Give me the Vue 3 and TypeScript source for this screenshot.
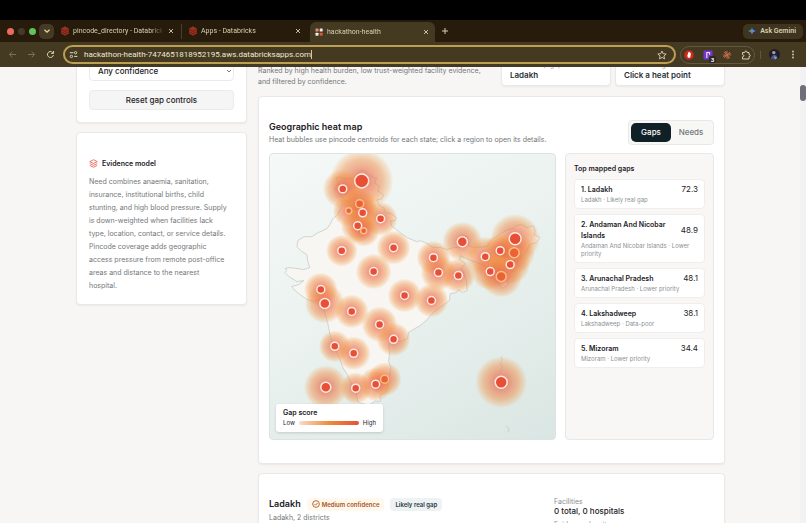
<script setup lang="ts">
import { ref } from 'vue'

interface Bubble { name: string; x: number; y: number; halo: number; dot: number; soft?: boolean }
interface Gap { rank: number; name: string; note: string; score: string }

const address = ref('hackathon-health-7474651818952195.aws.databricksapps.com')
const confidence = ref('Any confidence')
const mode = ref<'Gaps' | 'Needs'>('Gaps')
const modes: Array<'Gaps' | 'Needs'> = ['Gaps', 'Needs']

const bubbles: Bubble[] = [
  { name: 'Ladakh', x: 92, y: 27, halo: 32, dot: 7 },
  { name: 'Jammu and Kashmir', x: 73, y: 35, halo: 20, dot: 4 },
  { name: 'Uttarakhand', x: 111, y: 65, halo: 17, dot: 4 },
  { name: 'Punjab', x: 79, y: 57, halo: 16, dot: 3, soft: true },
  { name: 'Himachal Pradesh', x: 90, y: 50, halo: 17, dot: 4, soft: true },
  { name: 'Chandigarh', x: 93, y: 59, halo: 17, dot: 4 },
  { name: 'Haryana', x: 88, y: 72, halo: 17, dot: 4 },
  { name: 'Delhi', x: 94, y: 77, halo: 16, dot: 3, soft: true },
  { name: 'Rajasthan', x: 72, y: 97, halo: 16, dot: 4 },
  { name: 'Uttar Pradesh', x: 124, y: 94, halo: 17, dot: 4 },
  { name: 'Madhya Pradesh', x: 104, y: 118, halo: 18, dot: 4 },
  { name: 'Gujarat', x: 51, y: 136, halo: 17, dot: 4 },
  { name: 'Daman and Diu', x: 55, y: 150, halo: 20, dot: 5 },
  { name: 'Maharashtra', x: 82, y: 158, halo: 17, dot: 4 },
  { name: 'Chhattisgarh', x: 135, y: 142, halo: 17, dot: 4 },
  { name: 'Odisha', x: 162, y: 147, halo: 17, dot: 4 },
  { name: 'Bihar', x: 164, y: 104, halo: 17, dot: 4 },
  { name: 'Jharkhand', x: 169, y: 119, halo: 18, dot: 4 },
  { name: 'West Bengal', x: 189, y: 122, halo: 17, dot: 4 },
  { name: 'Sikkim', x: 193, y: 88, halo: 20, dot: 5 },
  { name: 'Arunachal Pradesh', x: 246, y: 85, halo: 25, dot: 6 },
  { name: 'Nagaland', x: 245, y: 99, halo: 21, dot: 5, soft: true },
  { name: 'Meghalaya', x: 216, y: 103, halo: 20, dot: 4 },
  { name: 'Manipur', x: 241, y: 111, halo: 20, dot: 4 },
  { name: 'Assam', x: 231, y: 97, halo: 17, dot: 4 },
  { name: 'Tripura', x: 221, y: 118, halo: 19, dot: 4 },
  { name: 'Mizoram', x: 232, y: 123, halo: 21, dot: 5, soft: true },
  { name: 'Telangana', x: 110, y: 171, halo: 18, dot: 4 },
  { name: 'Andhra Pradesh', x: 124, y: 186, halo: 17, dot: 4 },
  { name: 'Goa', x: 65, y: 193, halo: 16, dot: 4 },
  { name: 'Karnataka', x: 84, y: 200, halo: 17, dot: 4 },
  { name: 'Lakshadweep', x: 56, y: 234, halo: 22, dot: 5 },
  { name: 'Kerala', x: 86, y: 235, halo: 16, dot: 4 },
  { name: 'Puducherry', x: 115, y: 226, halo: 17, dot: 4, soft: true },
  { name: 'Tamil Nadu', x: 106, y: 231, halo: 17, dot: 4 },
  { name: 'Andaman And Nicobar Islands', x: 232, y: 229, halo: 26, dot: 6 },
]

const gaps: Gap[] = [
  { rank: 1, name: 'Ladakh', note: 'Ladakh · Likely real gap', score: '72.3' },
  { rank: 2, name: 'Andaman And Nicobar Islands', note: 'Andaman And Nicobar Islands · Lower priority', score: '48.9' },
  { rank: 3, name: 'Arunachal Pradesh', note: 'Arunachal Pradesh · Lower priority', score: '48.1' },
  { rank: 4, name: 'Lakshadweep', note: 'Lakshadweep · Data-poor', score: '38.1' },
  { rank: 5, name: 'Mizoram', note: 'Mizoram · Lower priority', score: '34.4' },
]

const tabs = [
  { title: 'pincode_directory - Databricks', kind: 'brick', active: false },
  { title: 'Apps - Databricks', kind: 'brick', active: false },
  { title: 'hackathon-health', kind: 'grid', active: true },
]
</script>

<template>
  <div class="window">
    <header class="browser">
      <div class="menu-bar"></div>
      <div class="tab-strip">
        <div class="lights"><i class="red"></i><i class="dim"></i><i class="green"></i></div>
        <button class="tab-search" aria-label="Search tabs">
          <svg width="8" height="8" viewBox="0 0 8 8"><path d="M1.5 2.8 4 5.2 6.500 2.800" fill="none" stroke="#e9dcae" stroke-width="1.200" /></svg>
        </button>
        <div v-for="tab in tabs" :key="tab.title" class="tab" :class="{ active: tab.active }">
          <svg v-if="tab.kind === 'brick'" class="favicon" width="10" height="10" viewBox="0 0 10 10">
            <path d="M1 2.500 5 .3 9 2.500V7.400L5 9.700 1 7.400Z" fill="#98301f" />
            <path d="M1 3.200 5 5.300 9 3.200M1 5.600 5 7.800 9 5.600" fill="none" stroke="#5a1d12" stroke-width=".7" />
          </svg>
          <svg v-else class="favicon" width="10" height="10" viewBox="0 0 10 10">
            <rect x="1.500" y="1.500" width="3" height="3" rx=".6" fill="#e88a7a" />
            <rect x="5.700" y="1.500" width="3" height="3" rx=".6" fill="#f7e6df" />
            <rect x="1.500" y="5.700" width="3" height="3" rx=".6" fill="#f7e6df" />
            <rect x="5.700" y="5.700" width="3" height="3" rx=".6" fill="#e0533f" />
          </svg>
          <span class="tab-title">{{ tab.title }}</span>
          <button class="close" :aria-label="`Close ${tab.title}`">
            <svg width="6" height="6" viewBox="0 0 6 6"><path d="M1 1 5 5M5 1 1 5" stroke="currentColor" stroke-width=".9" /></svg>
          </button>
        </div>
        <button class="new-tab" aria-label="New tab">
          <svg width="8" height="8" viewBox="0 0 8 8"><path d="M4 1V7M1 4H7" stroke="#d9cfae" stroke-width="1" /></svg>
        </button>
        <button class="gemini">
          <svg width="8" height="8" viewBox="0 0 8 8">
            <defs>
              <linearGradient id="spark" x1="0" y1=".3" x2="1" y2=".7">
                <stop offset="0" stop-color="#f2c230" /><stop offset=".3" stop-color="#5b9a6c" /><stop offset=".5" stop-color="#4b86f0" /><stop offset="1" stop-color="#6f9cf5" />
              </linearGradient>
            </defs>
            <path d="M4 0C4.300 2.500 5.500 3.700 8 4 5.500 4.300 4.300 5.500 4 8 3.700 5.500 2.500 4.300 0 4 2.500 3.700 3.700 2.500 4 0Z" fill="url(#spark)" />
          </svg>
          Ask Gemini
        </button>
      </div>
      <div class="toolbar">
        <nav class="nav">
          <button aria-label="Back"><svg width="9" height="9" viewBox="0 0 9 9"><path d="M8 4.500H1.500M4.300 1.600 1.400 4.500 4.300 7.400" fill="none" stroke="#7b7256" /></svg></button>
          <button aria-label="Forward"><svg width="9" height="9" viewBox="0 0 9 9"><path d="M1 4.500H7.500M4.700 1.600 7.600 4.500 4.700 7.400" fill="none" stroke="#7b7256" /></svg></button>
          <button aria-label="Reload"><svg width="9" height="9" viewBox="0 0 9 9"><path d="M7.400 5A3 3 0 1 1 6.600 2.400L7.400 3.200M7.500 1V3.400H5.100" fill="none" stroke="#d9cfae" /></svg></button>
        </nav>
        <div class="omnibox">
          <svg width="9" height="9" viewBox="0 0 9 9">
            <path d="M.8 2.700H4.400M5.200 6.400H8.400" stroke="#e0d8bd" />
            <circle cx="6.600" cy="2.700" r="1.200" fill="none" stroke="#e0d8bd" stroke-width=".9" />
            <circle cx="2.400" cy="6.400" r="1.200" fill="none" stroke="#e0d8bd" stroke-width=".9" />
          </svg>
          <label class="address"><input v-model="address" aria-label="Address" /><span class="caret"></span></label>
          <button aria-label="Bookmark this page">
            <svg width="10" height="10" viewBox="0 0 10 10"><path d="M5 1 6.200 3.700 9.200 4 6.900 6 7.600 8.900 5 7.400 2.400 8.900 3.100 6 .8 4 3.800 3.700Z" fill="none" stroke="#d9cfae" stroke-width=".9" /></svg>
          </button>
        </div>
        <div class="extensions">
          <button aria-label="Ad blocker">
            <svg width="10" height="10" viewBox="0 0 10 10"><path d="M3 .5H7L9.500 3V7L7 9.500H3L.5 7V3Z" fill="#d3281f" /><path d="M3.200 4.500 3.700 7.200 5 8 6.300 7.200 6.900 4V3.300H6.300V2.500H5.600V2H4.700V2.500H4V4.800Z" fill="#fff" /></svg>
          </button>
          <button class="badged" aria-label="Recorder">
            <svg width="10" height="10" viewBox="0 0 10 10"><rect x=".5" y=".5" width="9" height="9" rx="1" fill="#7438c9" /><path d="M3.800 8V2.500H6.500V4.800" fill="none" stroke="#e8d9ff" stroke-width="1.200" /></svg>
            <span class="badge">3</span>
          </button>
          <button aria-label="Assistant">
            <svg width="10" height="10" viewBox="0 0 10 10"><path d="M5 .8V9.200M.8 5H9.200M2 2 8 8M8 2 2 8M3.400 1.200 6.600 8.800M1.200 6.600 8.800 3.400" stroke="#c9694b" stroke-width=".9" /></svg>
          </button>
          <button aria-label="Extensions">
            <svg width="10" height="10" viewBox="0 0 10 10"><path d="M1.500 2.500H3.700Q3.700 1 4.900 1 6.100 1 6.100 2.500H8V4.500Q9.300 4.500 9.300 5.500 9.300 6.600 8 6.600V9H1.500V6.900Q2.900 6.800 2.900 5.700 2.900 4.700 1.500 4.600Z" fill="none" stroke="#d9cfae" /></svg>
          </button>
        </div>
        <div class="divider"></div>
        <button class="profile" aria-label="Profile">
          <svg width="11" height="11" viewBox="0 0 11 11"><circle cx="5.500" cy="5.500" r="5.500" fill="#1d1d2c" /><circle cx="4.800" cy="3.600" r="1.700" fill="#b79a91" /><path d="M1.800 9.500Q3 5.500 6 5.800 8.300 6.300 8.600 9.800 5 12 1.800 9.500Z" fill="#4a5488" /><path d="M5 7 8 8.500 6 10.500Z" fill="#a7a6b5" /></svg>
        </button>
        <button class="more" aria-label="Menu">
          <svg width="4" height="9" viewBox="0 0 4 9"><circle cx="2" cy="1.500" r=".9" fill="#d9cfae" /><circle cx="2" cy="4.500" r=".9" fill="#d9cfae" /><circle cx="2" cy="7.500" r=".9" fill="#d9cfae" /></svg>
        </button>
      </div>
    </header>

    <div class="viewport">
      <div class="page">
        <aside class="side">
          <section class="card controls">
            <div class="select-wrap">
              <select v-model="confidence" aria-label="Confidence"><option>Any confidence</option></select>
              <svg width="6" height="6" viewBox="0 0 6 6"><path d="M1 2 3 4 5 2" fill="none" stroke="#555" stroke-width=".8" /></svg>
            </div>
            <button class="reset">Reset gap controls</button>
          </section>
          <section class="card evidence">
            <h2>
              <svg width="9" height="9" viewBox="0 0 24 24" fill="none" stroke="#ee5a48" stroke-width="2.200" stroke-linejoin="round"><path d="M12 2 22 7 12 12 2 7Z" /><path d="M2 12 12 17 22 12" /><path d="M2 17 12 22 22 17" /></svg>
              Evidence model
            </h2>
            <p>Need combines anaemia, sanitation, insurance, institutional births, child stunting, and high blood pressure. Supply is down-weighted when facilities lack type, location, contact, or service details. Pincode coverage adds geographic access pressure from remote post-office areas and distance to the nearest hospital.</p>
          </section>
        </aside>

        <main class="main">
          <div class="intro">
            <p>Ranked by high health burden, low trust-weighted facility evidence, and filtered by confidence.</p>
            <div class="card stat"><span>Current top gap</span><strong>Ladakh</strong></div>
            <div class="card stat"><span>Selected region</span><strong>Click a heat point</strong></div>
          </div>

          <section class="card map-card">
            <div class="map-head">
              <div>
                <h1>Geographic heat map</h1>
                <p>Heat bubbles use pincode centroids for each state; click a region to open its details.</p>
              </div>
              <div class="toggle">
                <button v-for="m in modes" :key="m" :class="{ on: mode === m }" @click="mode = m">{{ m }}</button>
              </div>
            </div>
            <div class="map-body">
              <div class="map">
                <svg class="map-art" viewBox="0 0 286 286">
                  <defs>
                    <radialGradient id="halo">
                      <stop offset="0" stop-color="#ea5034" stop-opacity=".75" />
                      <stop offset=".35" stop-color="#ea6a44" stop-opacity=".6" />
                      <stop offset=".68" stop-color="#ef8a40" stop-opacity=".46" />
                      <stop offset=".87" stop-color="#f2a050" stop-opacity=".26" />
                      <stop offset="1" stop-color="#f3a860" stop-opacity="0" />
                    </radialGradient>
                  </defs>
                  <path class="land" d="M66 24 70 23 74 25 82 25 86 21 91 17 95 17 98 20 104 24 107 24 105 29 110 33 108 37 114 41 112 45 107 46 109 51 114 54 116 59 122 60 127 64 125 67 121 67 122 72 127 76 132 80 138 84 147 88 151 87 158 90 163 94 171 94 178 96 184 94 191 94 190 88 192 82 198 83 199 92 206 94 218 93 222 87 230 81 238 76 244 75 247 72 252 71 258 74 264 72 266 77 265 81 271 84 267 89 260 91 258 97 249 106 247 115 241 120 238 127 239 131 233 135 230 130 227 122 221 125 216 120 217 113 208 109 200 106 196 104 191 102 190 106 196 110 192 114 195 121 197 128 198 137 193 139 189 136 187 139 181 140 180 147 175 151 167 156 161 162 158 166 151 172 144 176 139 179 138 185 131 188 122 188 119 192 120 200 119 208 121 214 120 222 118 232 116 239 110 242 111 248 105 248 99 252 91 250 88 248 87 241 82 231 78 222 73 214 70 205 66 197 62 187 60 180 58 170 55 159 54 149 49 146 44 148 37 146 30 141 24 136 22 133 29 131 34 127 27 128 19 123 15 119 17 117 15 115 19 114 28 115 34 116 40 114 38 108 37 101 32 98 27 93 28 87 34 83 42 83 48 79 57 75 60 71 63 65 68 61 72 53 77 48 72 43 70 38 65 35 69 29Z" />
                  <path class="islands" d="M232 203 233 207 231 209 233 214 231 219M237 273 240 276 239 279" />
                  <circle v-for="b in bubbles" :key="b.name + '-halo'" :cx="b.x" :cy="b.y" :r="b.halo" fill="url(#halo)" />
                  <circle v-for="b in bubbles" :key="b.name" class="dot" :class="{ soft: b.soft }" :cx="b.x" :cy="b.y" :r="b.dot"><title>{{ b.name }}</title></circle>
                </svg>
                <div class="legend">
                  <strong>Gap score</strong>
                  <div class="scale"><span>Low</span><i></i><span>High</span></div>
                </div>
              </div>
              <div class="ranking">
                <h2>Top mapped gaps</h2>
                <button v-for="g in gaps" :key="g.rank" class="gap">
                  <span class="gap-row"><b>{{ g.rank }}. {{ g.name }}</b><span class="score">{{ g.score }}</span></span>
                  <small>{{ g.note }}</small>
                </button>
              </div>
            </div>
          </section>

          <section class="card region">
            <div class="region-name">
              <div class="region-title">
                <h2>Ladakh</h2>
                <span class="pill amber">
                  <svg width="8" height="8" viewBox="0 0 24 24" fill="none" stroke="#a8551f" stroke-width="2.600"><circle cx="12" cy="12" r="10" /><path d="M7.500 12.500 10.500 15.500 16.500 9" /></svg>
                  Medium confidence
                </span>
                <span class="pill">Likely real gap</span>
              </div>
              <p>Ladakh, 2 districts</p>
            </div>
            <dl>
              <dt>Facilities</dt>
              <dd>0 total, 0 hospitals</dd>
              <dt>Evidence density</dt>
            </dl>
          </section>
        </main>
      </div>
      <div class="scrollbar"><i></i></div>
    </div>
  </div>
</template>

<style>
body { margin: 0; overflow: hidden; }
</style>

<style scoped>
.window { display: flex; flex-direction: column; height: 100vh; background: #f7f6f5; color: #1c2024; font: 7px/11px Inter, "Liberation Sans", sans-serif; }
.window * { box-sizing: border-box; }
button, input, select { font: inherit; color: inherit; margin: 0; padding: 0; border: 0; background: none; }
svg { display: block; flex: none; }
h1, h2, p, dl, dd { margin: 0; }

.browser { flex: none; color: #d9cfae; font-family: Roboto, "Liberation Sans", sans-serif; }
.menu-bar { height: 20px; background: #000; }
.tab-strip { display: flex; align-items: center; height: 22px; padding: 0 3px 0 7px; background: #271b0b; }
.lights { display: flex; gap: 4px; margin-right: 3px; }
.lights i { width: 7px; height: 7px; border-radius: 50%; }
.red { background: #ee6a5f; }
.dim { background: #453a28; }
.green { background: #5fc454; }
.tab-search { display: grid; place-items: center; width: 15px; height: 15px; border-radius: 5px; background: #453a23; }
.tab { display: flex; align-items: center; gap: 3px; width: 127px; height: 15px; padding: 0 6px; }
.tab + .tab:not(.active) { border-left: 1px solid #4a3e28; }
.tab.active { align-self: flex-end; width: 125px; height: 20px; margin-left: 2px; padding: 0 5px 0 4px; border-radius: 6px 6px 0 0; background: #443a22; }
.tab-title { flex: 1; overflow: hidden; white-space: nowrap; mask-image: linear-gradient(90deg, #000 85%, transparent); }
.close { display: grid; place-items: center; width: 8px; }
.new-tab { margin-left: 6px; }
.gemini { display: flex; align-items: center; gap: 4px; height: 15px; margin-left: auto; padding: 0 7px 0 5px; border-radius: 5px; background: #3e3420; font-weight: 600; }
.toolbar { display: flex; align-items: center; height: 25px; padding: 0 11px 0 8px; background: #443a22; }
.nav { display: flex; gap: 10px; margin-right: 8px; }
.omnibox { display: flex; align-items: center; gap: 6px; flex: 1; height: 19px; padding: 0 7px 0 4px; border: 2px solid #bd9f53; border-radius: 10px; background: #443a22; }
.address { display: flex; align-items: center; flex: 1; color: #eee7d2; font-size: 8px; }
.address input { field-sizing: content; outline: 0; }
.caret { width: 1px; height: 9px; background: #d8c88f; }
.extensions { display: flex; align-items: center; gap: 9px; height: 18px; margin-left: 4px; padding: 0 3px; border: 1px solid #625840; border-radius: 9px; }
.badged { position: relative; }
.badge { position: absolute; right: -3px; bottom: -3px; width: 7px; height: 7px; border-radius: 2px; background: #282828; color: #fff; font-size: 6px; line-height: 7px; font-weight: 700; }
.divider { width: 1px; height: 8px; margin: 0 8px 0 5px; background: #625840; }
.more { margin-left: 11px; }

.viewport { display: flex; flex: 1; min-height: 0; overflow: hidden; }
.page { display: grid; grid-template-columns: 171px minmax(0, 1fr); align-items: start; gap: 11px; flex: 1; margin-top: -16px; padding: 0 75px 0 76px; }
.scrollbar { width: 6px; padding-top: 18px; background: #f3f2f3; }
.scrollbar i { display: block; height: 16px; border-radius: 3px; background: #706e78; }
.card { border: 1px solid #ebe9e7; border-radius: 4px; background: #fff; box-shadow: 0 1px 2px #0000000f; }
.side, .main { display: flex; flex-direction: column; gap: 9px; }

.controls { display: flex; flex-direction: column; gap: 9px; padding: 9px 12px 12px; }
.select-wrap { display: grid; align-items: center; }
.select-wrap > * { grid-area: 1 / 1; }
.select-wrap svg { justify-self: end; margin-right: 2px; pointer-events: none; }
select { appearance: none; height: 20px; padding: 0 8px; border: 1px solid #eceae8; border-radius: 4px; background: #fff; font-size: 8px; font-weight: 500; }
.reset { height: 20px; border: 1px solid #ebebea; border-radius: 4px; background: #f5f5f5; font-size: 8px; font-weight: 500; }
.evidence { padding: 25px 18px 12px 12px; }
.evidence h2 { display: flex; align-items: center; gap: 4px; font-size: 7px; line-height: 11px; font-weight: 600; }
.evidence p { margin-top: 6px; line-height: 13px; color: #747779; }

.intro { display: grid; grid-template-columns: minmax(0, 1fr) 110px 110px; gap: 4px; align-items: start; }
.intro p { padding: 14px 12px 0 0; color: #747779; }
.stat { display: flex; flex-direction: column; height: 35px; padding: 8px; line-height: 10px; }
.stat span { color: #8b8e90; }
.stat strong { font-size: 8px; font-weight: 600; color: #1f3036; }

.map-card { padding: 23px 10px; }
.map-head { display: flex; align-items: center; justify-content: space-between; }
h1, .region h2 { font-size: 9px; line-height: 14px; font-weight: 600; }
.map-head p { color: #747779; }
.toggle { display: flex; height: 25px; padding: 2px; border: 1px solid #e9e8e6; border-radius: 4px; background: #f7f7f6; }
.toggle button { width: 40px; border-radius: 5px; color: #74787a; font-size: 8px; font-weight: 500; }
.toggle .on { background: #102027; color: #fff; }
.map-body { display: grid; grid-template-columns: minmax(0, 1fr) 149px; gap: 9px; margin-top: 8px; }
.map { position: relative; overflow: hidden; border: 1px solid #dde3e1; border-radius: 4px; background: linear-gradient(150deg, #f5f9f8 0%, #ebf2f0 45%, #dae6e3 100%); }
.map-art { width: 100%; }
.land { fill: #f8f6f2; stroke: #bfc5c2; stroke-width: .7; stroke-linejoin: round; }
.islands { fill: none; stroke: #bfc5c2; stroke-width: .7; }
.dot { fill: #e94f36; stroke: #fcece3; stroke-width: 1.5; cursor: pointer; }
.dot.soft { fill: #ec6232; stroke: #f7bd8c; }
.legend { position: absolute; left: 6px; bottom: 7px; padding: 4px 7px; border-radius: 3px; background: #fff; box-shadow: 0 1px 3px #00000026; font-size: 6px; line-height: 10px; }
.legend strong { font-size: 7px; font-weight: 600; }
.scale { display: flex; align-items: center; gap: 4px; }
.scale i { width: 60px; height: 4px; border-radius: 2px; background: linear-gradient(90deg, #fbdcc9, #ee8c3c 50%, #e94f36); }

.ranking { display: flex; flex-direction: column; gap: 5px; padding: 9px 8px; border: 1px solid #e9e8e6; border-radius: 4px; background: #f8f7f6; }
.ranking h2 { font-size: 7px; line-height: 11px; font-weight: 600; }
.gap { padding: 4px 6px; border: 1px solid #efeeec; border-radius: 4px; background: #fff; text-align: left; }
.gap-row { display: flex; align-items: center; justify-content: space-between; gap: 8px; line-height: 11px; }
.score { font-size: 8px; }
.gap b { font-weight: 600; }
.gap small { display: block; margin-top: 1px; color: #8d9092; font-size: 6px; line-height: 8px; }

.region { display: grid; grid-template-columns: minmax(0, 1fr) 160px; padding: 23px 10px; }
.region-title { display: flex; align-items: center; gap: 6px; }
.region p { margin-top: 1px; color: #747779; }
.pill { display: flex; align-items: center; gap: 2px; height: 13px; padding: 0 5px; border-radius: 4px; background: #eff2f3; color: #26383e; font-size: 6px; font-weight: 600; }
.amber { background: #fff8ec; color: #a8551f; }
dl { line-height: 9px; }
dt { color: #8d9092; }
dd { margin-bottom: 4px; font-size: 8px; line-height: 10px; font-weight: 500; }
</style>
